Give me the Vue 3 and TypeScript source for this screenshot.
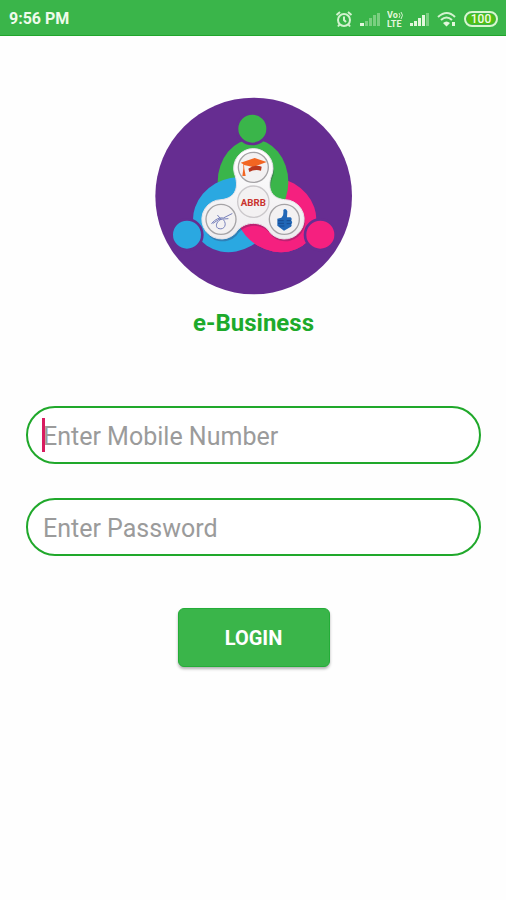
<script setup lang="ts">
import { ref } from 'vue'

const mobile = ref('')
const password = ref('')
const time = '9:56 PM'
const battery = 100
</script>

<template>
  <div class="screen">
    <header class="status">
      <span class="time">{{ time }}</span>
      <div class="indicators">
        <svg class="alarm" viewBox="0 0 18 18" aria-hidden="true">
          <circle cx="9" cy="10" r="6" />
          <path d="M1.500 5 5 2M16.500 5 13 2M9 6.500V10l2 2M4.500 14.500 3 16.500M13.500 14.500l1.500 2" />
        </svg>
        <svg class="signal" viewBox="0 0 20 16" aria-hidden="true">
          <path class="on" d="M0 15v-3h4v3z" />
          <path class="off" d="M5 15v-5h3v5zM9 15V7h3v8zM13 15V4h3v11zM17 15V2h3v13z" />
        </svg>
        <svg class="volte" viewBox="0 0 16 18" aria-hidden="true">
          <text x="0" y="8">Vo</text>
          <text x="0" y="17">LTE</text>
          <path d="M12 3q2 2 0 5M14 2q3 3 0 7" />
        </svg>
        <svg class="signal" viewBox="0 0 20 16" aria-hidden="true">
          <path class="on" d="M0 15v-3h3v3zM4 15v-5h3v5zM8 15V7h3v8zM12 15V4h3v11z" />
          <path class="off" d="M16 15V2h3v13z" />
        </svg>
        <svg class="wifi" viewBox="0 0 20 16" aria-hidden="true">
          <path d="M1 6q9-8 17 0M4 9q5.500-5 11 0" />
          <path class="dot" d="M6 12q3.500-3 7 0l-3.500 3.500zM15 11h3v4h-3z" />
        </svg>
        <span class="battery"><span class="charge" :style="{ width: battery + '%' }">{{ battery }}</span></span>
      </div>
    </header>

    <main class="content">
      <svg class="logo" viewBox="15 21 594 594" role="img" aria-label="e-Business logo">
        <defs>
          <clipPath id="lower"><rect x="200" y="395" width="320" height="110" /></clipPath>
          <linearGradient id="plastic" x1="0" y1="0" x2="0" y2="1">
            <stop offset="0" stop-color="#fff" />
            <stop offset="1" stop-color="#eeecef" />
          </linearGradient>
        </defs>
        <circle cx="311" cy="318" r="295" fill="#662d91" />
        <ellipse cx="378" cy="374" rx="125" ry="108" transform="rotate(30 378 374)" fill="#f5207f" />
        <ellipse cx="309" cy="276" rx="106" ry="128" fill="#3ab54a" />
        <ellipse cx="250" cy="374" rx="125" ry="108" transform="rotate(-30 250 374)" fill="#2aa8e1" />
        <ellipse cx="378" cy="374" rx="125" ry="108" transform="rotate(30 378 374)" fill="#f5207f" clip-path="url(#lower)" />
        <g stroke="#662d91" stroke-width="8">
          <circle cx="307" cy="116" r="46" fill="#3ab54a" />
          <circle cx="111" cy="434" r="46" fill="#2aa8e1" />
          <circle cx="511" cy="434" r="46" fill="#f5207f" />
        </g>
        <path
          d="M253 250A59 59 0 1 1 367 250C350 290 360 325 404 329A59 59 0 1 1 362 430C340 390 280 390 256 430A59 59 0 1 1 213 329C258 325 268 290 253 250Z"
          transform="translate(3 7)" fill="#3b2456" opacity=".3"
        />
        <path
          d="M253 250A59 59 0 1 1 367 250C350 290 360 325 404 329A59 59 0 1 1 362 430C340 390 280 390 256 430A59 59 0 1 1 213 329C258 325 268 290 253 250Z"
          fill="url(#plastic)" stroke="#e6e3e8" stroke-width="3"
        />
        <g fill="#f3f1f2" stroke="#a5a3a6" stroke-width="4">
          <circle cx="310" cy="232" r="45" />
          <circle cx="213" cy="388" r="45" />
          <circle cx="403" cy="388" r="45" />
          <circle cx="310" cy="335" r="47" stroke="#cbc8cb" />
        </g>
        <path d="M272 218 314 204 350 216 309 231 282 225 283 236 287 258H277L280 236V223Z" fill="#f26522" />
        <path d="M295 236Q315 222 335 230L333 242Q315 237 298 246Z" fill="#b8371e" />
        <text x="310" y="348" text-anchor="middle" class="brand">ABRB</text>
        <g fill="none" stroke="#7780bb" stroke-width="3" stroke-linecap="round">
          <path d="M185 400Q203 380 220 384L246 371M189 400 207 388 234 386M203 376 213 388" />
          <path d="M213 388C198 394 194 413 207 416C223 420 232 403 221 390" />
        </g>
        <path d="M400 360Q407 352 412 364L411 382H421Q427 384 424 392Q429 396 424 403Q427 409 420 412L402 422 382 407V386L394 383Q402 376 400 360Z" fill="#2167b7" />
        <path d="M384 392H401M384 400H402M388 408H403M410 392H423M410 401H423" fill="none" stroke="#174b91" stroke-width="3" />
      </svg>
      <h1 class="title">e-Business</h1>

      <form class="form" @submit.prevent>
        <div class="field">
          <input v-model="mobile" type="tel" placeholder="Enter Mobile Number" aria-label="Enter Mobile Number" />
          <span v-if="!mobile" class="caret" aria-hidden="true"></span>
        </div>
        <div class="field">
          <input v-model="password" type="password" placeholder="Enter Password" aria-label="Enter Password" />
        </div>
        <button class="login" type="submit">LOGIN</button>
      </form>
    </main>
  </div>
</template>

<style>
body {
  background: #fefefe;
}
</style>

<style scoped>
.screen {
  min-height: 100vh;
  font-family: Roboto, "Liberation Sans", sans-serif;
  background: #fefefe;
}

.status {
  display: flex;
  align-items: center;
  justify-content: space-between;
  box-sizing: border-box;
  height: 36px;
  padding: 2px 8px 0 9px;
  color: #effbea;
  background: #3ab54a;
  border-bottom: 1px solid #20a52c;
}

.time {
  font-size: 16px;
  font-weight: 700;
}

.indicators {
  display: flex;
  align-items: center;
  gap: 7px;
}

.indicators svg {
  fill: none;
  stroke: #d3f2cf;
  stroke-width: 2;
}

.alarm {
  width: 18px;
  height: 18px;
}

.volte {
  width: 16px;
  height: 18px;
}

.signal,
.wifi {
  width: 20px;
  height: 16px;
}

.indicators .signal,
.indicators .volte text,
.wifi .dot {
  stroke: none;
  fill: #e2f7dc;
}

.signal .off {
  fill: #7acf80;
}

.indicators .volte {
  stroke-width: 1;
}

.volte text {
  font-size: 9px;
  font-weight: 700;
}

.battery {
  box-sizing: border-box;
  width: 34px;
  height: 16px;
  padding: 1px;
  border: 2px solid #d9f6ce;
  border-radius: 8px;
}

.charge {
  display: block;
  border-radius: 5px;
  background: #52bf13;
  font-size: 12px;
  font-weight: 500;
  line-height: 10px;
  text-align: center;
}

.content {
  display: flex;
  flex-direction: column;
  align-items: center;
  padding: 61px 25px 24px 26px;
}

.logo {
  width: 198px;
  height: 198px;
}

.brand {
  font-size: 29px;
  font-weight: 700;
  fill: #c9342f;
}

.title {
  margin: 14px 0 0;
  color: #1daa2b;
  font-size: 24px;
  font-weight: 700;
  line-height: 28px;
}

.form {
  display: flex;
  flex-direction: column;
  align-items: center;
  gap: 34px;
  width: 100%;
  margin-top: 69px;
}

.field {
  position: relative;
  width: 100%;
}

.field input {
  display: block;
  box-sizing: border-box;
  width: 100%;
  height: 58px;
  padding: 2px 15px 0;
  border: 2px solid #20a82b;
  border-radius: 29px;
  outline: none;
  color: #333;
  background: #fff;
  font: 400 25px Roboto, "Liberation Sans", sans-serif;
}

.field input::placeholder {
  color: #9b9b9b;
  opacity: 1;
}

.caret {
  position: absolute;
  top: 12px;
  left: 16px;
  width: 3px;
  height: 34px;
  background: #d81b60;
}

.login {
  width: 152px;
  height: 59px;
  margin-top: 18px;
  border: 1px solid #24ad38;
  border-radius: 6px;
  color: #fff;
  background: #3ab54a;
  box-shadow: 0 2px 3px rgb(0 0 0 / 30%);
  font: 700 20px Roboto, "Liberation Sans", sans-serif;
}
</style>
